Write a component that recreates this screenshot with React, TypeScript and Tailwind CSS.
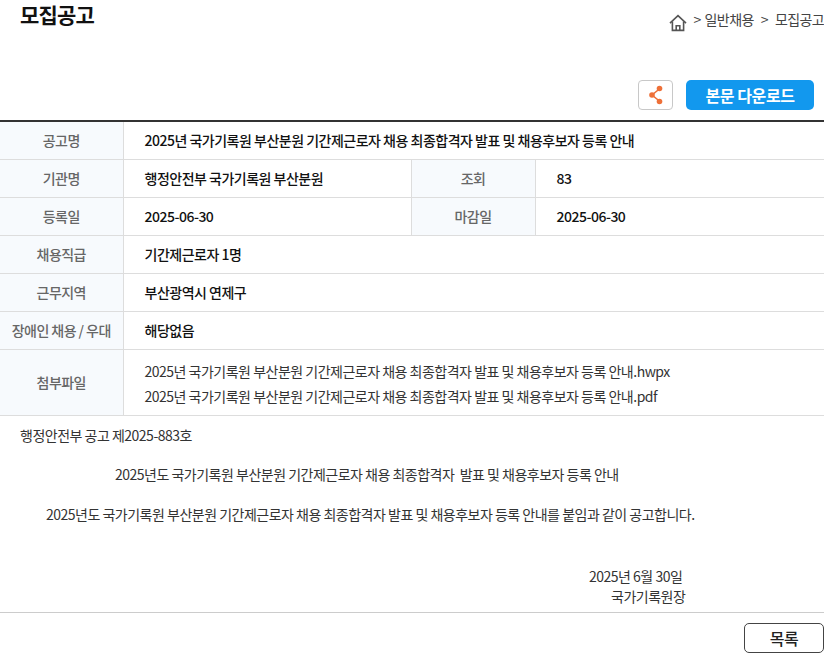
const FONT = "font-['Noto_Sans_CJK_KR','Noto_Sans',sans-serif]";

const TITLE = "2025년 국가기록원 부산분원 기간제근로자 채용 최종합격자 발표 및 채용후보자 등록 안내";

function Th({ children }: { children: React.ReactNode }) {
  return (
    <th className="border-r border-[#dddddd] bg-[#f7fafd] text-center align-middle text-[14px] font-medium tracking-[-0.55px] text-[#666666]">
      {children}
    </th>
  );
}

function Td({ children, span }: { children: React.ReactNode; span?: number }) {
  return (
    <td colSpan={span} className="pl-[21px] pr-5 align-middle text-[14px] font-medium tracking-[-0.5px] text-[#111111]">
      {children}
    </td>
  );
}

function Row({ children }: { children: React.ReactNode }) {
  return <tr className="h-[38px] border-b border-[#dddddd]">{children}</tr>;
}

export default function App() {
  return (
    <div className={`h-[654px] w-[824px] overflow-hidden bg-white ${FONT}`}>
      <div className="flex h-[80px] items-start justify-between pl-5">
        <h2 className="text-[21px] leading-[28px] font-bold tracking-[-0.8px] text-[#111111]">모집공고</h2>
        <div className="mt-[9px] flex items-start whitespace-nowrap text-[14px] leading-[20px] tracking-[-0.6px] text-[#444444]">
          <svg className="mr-[6px] mt-[5px]" width="18" height="18" viewBox="0 0 18 18" fill="none" stroke="#555555" strokeWidth="1.6">
            <path d="M1 9.2 9 1.6l8 7.6" />
            <path d="M3.4 7.4v9h11.2v-9" />
            <path d="M7.2 16.4v-4.6h3.6v4.6" />
          </svg>
          <span className="mr-[4px]">&gt;</span>
          <span>일반채용</span>
          <span className="mx-[7px]">&gt;</span>
          <span>모집공고</span>
        </div>
      </div>

      <div className="flex h-[40px] items-start justify-end gap-[13px] pr-[10px]">
        <button className="flex h-[30px] w-[35px] items-center justify-center rounded-[4px] border border-[#c8c8c8] bg-white">
          <svg width="16" height="22" viewBox="0 0 16 22" fill="none">
            <path d="M12 4.5 4 11l8 6.5" stroke="#ee7038" strokeWidth="1.6" />
            <circle cx="11.5" cy="4.5" r="2.8" fill="#ee7038" />
            <circle cx="4" cy="11" r="2.8" fill="#ee7038" />
            <circle cx="11.5" cy="17.5" r="2.8" fill="#ee7038" />
          </svg>
        </button>
        <button className="h-[30px] w-[128px] rounded-[5px] bg-[#1298ee] text-[16px] font-bold tracking-[-0.4px] text-white">
          본문 다운로드
        </button>
      </div>

      <table className="w-full table-fixed border-collapse border-t-2 border-[#333333]">
        <colgroup>
          <col className="w-[123px]" />
          <col className="w-[288px]" />
          <col className="w-[124px]" />
          <col />
        </colgroup>
        <tbody>
          <Row>
            <Th>공고명</Th>
            <Td span={3}>{TITLE}</Td>
          </Row>
          <Row>
            <Th>기관명</Th>
            <td className="border-r border-[#dddddd] pl-[21px] pr-5 text-[14px] font-medium tracking-[-0.5px] text-[#111111]">
              행정안전부 국가기록원 부산분원
            </td>
            <Th>조회</Th>
            <Td>83</Td>
          </Row>
          <Row>
            <Th>등록일</Th>
            <td className="border-r border-[#dddddd] pl-[21px] pr-5 text-[14px] font-medium tracking-[-0.5px] text-[#111111]">
              2025-06-30
            </td>
            <Th>마감일</Th>
            <Td>2025-06-30</Td>
          </Row>
          <Row>
            <Th>채용직급</Th>
            <Td span={3}>기간제근로자 1명</Td>
          </Row>
          <Row>
            <Th>근무지역</Th>
            <Td span={3}>부산광역시 연제구</Td>
          </Row>
          <Row>
            <Th>장애인 채용 / 우대</Th>
            <Td span={3}>해당없음</Td>
          </Row>
          <tr className="h-[66px] border-b border-[#dddddd]">
            <Th>첨부파일</Th>
            <td colSpan={3} className="pl-[21px] pr-5 pt-[3px] text-[14px] leading-[25px] tracking-[-0.5px] text-[#333333]">
              <p>{TITLE}.hwpx</p>
              <p>{TITLE}.pdf</p>
            </td>
          </tr>
        </tbody>
      </table>

      <div className="h-[197px] border-b border-[#cccccc] text-[14px] leading-[20px] tracking-[-0.5px] text-[#333333]">
        <p className="pl-5 pt-[9px]">행정안전부 공고 제2025-883호</p>
        <p className="mt-[19px] pl-[115px] whitespace-pre">2025년도 국가기록원 부산분원 기간제근로자 채용 최종합격자  발표 및 채용후보자 등록 안내</p>
        <p className="mt-[20px] pl-[46px]">2025년도 국가기록원 부산분원 기간제근로자 채용 최종합격자 발표 및 채용후보자 등록 안내를 붙임과 같이 공고합니다.</p>
        <p className="mt-[42px] pl-[589px]">2025년 6월 30일</p>
        <p className="pl-[611px]">국가기록원장</p>
      </div>

      <div className="flex justify-end pt-[10px]">
        <button className="h-[30px] w-[80px] rounded-[5px] border border-[#444444] bg-white text-[16px] font-medium tracking-[-0.4px] text-[#222222]">
          목록
        </button>
      </div>
    </div>
  );
}
